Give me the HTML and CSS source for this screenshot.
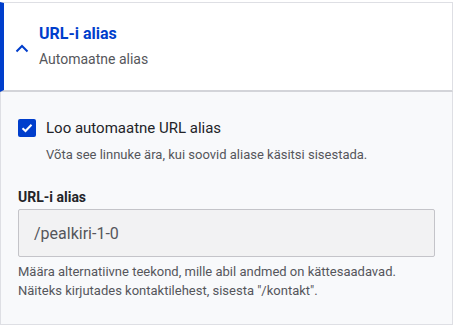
FILE: index.html
```html
<!DOCTYPE html>
<html lang="et">
<head>
  <meta charset="UTF-8" />
  <meta name="viewport" content="width=device-width, initial-scale=1.0"/>
  <title>URL-i alias</title>
  <link rel="stylesheet" href="styles.css">
</head>
<body>
  <div class="details">
    <div class="summary">
      <svg class="chevron" width="14" height="9" viewBox="0 0 14 9">
        <path d="M1.5 7.5 L7 2 L12.5 7.5" fill="none" stroke="#003ecc" stroke-width="2"/>
      </svg>
      <div class="summary-text">
        <div class="summary-title">URL-i alias</div>
        <div class="summary-sub">Automaatne alias</div>
      </div>
    </div>

    <div class="details-body">
      <div class="check-item">
        <label class="check-row">
          <span class="checkbox">
            <svg width="12" height="10" viewBox="0 0 12 10">
              <path d="M1.5 5.2 L4.5 8 L10.5 1.8" fill="none" stroke="#fff" stroke-width="2"/>
            </svg>
          </span>
          <span class="check-label">Loo automaatne URL alias</span>
        </label>
        <div class="check-desc">Võta see linnuke ära, kui soovid aliase käsitsi sisestada.</div>
      </div>

      <div class="field">
        <label class="field-label">URL-i alias</label>
        <div class="field-input">/pealkiri-1-0</div>
        <div class="field-desc">Määra alternatiivne teekond, mille abil andmed on kättesaadavad.<br>Näiteks kirjutades kontaktilehest, sisesta "/kontakt".</div>
      </div>
    </div>
  </div>
</body>
</html>
```

FILE: styles.css
```css
body {
  margin: 0;
  padding: 2px 0 0;
  background: #fff;
  font-family: Roboto, "Noto Sans", sans-serif;
  color: #232429;
}

.details {
  width: 453px;
}

.summary {
  display: flex;
  align-items: center;
  gap: 10px;
  padding: 21px 0 21px 11px;
  background: #fff;
  border-top: 1px solid #dedfe4;
  border-right: 1px solid #dedfe4;
  border-left: 4px solid #003ecc;
  border-bottom: 2px solid #d3d4d9;
}

.chevron {
  display: block;
  margin-top: 4px;
}

.summary-title {
  font-size: 16px;
  line-height: 20px;
  font-weight: 700;
  color: #003ecc;
}

.summary-sub {
  margin-top: 5px;
  font-size: 14px;
  line-height: 20px;
  color: #55565b;
}

.details-body {
  background: #f8f9fb;
  border-left: 1px solid #dedfe4;
  border-right: 1px solid #dedfe4;
  border-bottom: 1px solid #dedfe4;
  padding: 26px 17px 24px 17px;
}

.check-row {
  display: flex;
  align-items: center;
  gap: 10px;
}

.checkbox {
  width: 18px;
  height: 18px;
  border-radius: 2px;
  background: #003ecc;
  display: flex;
  align-items: center;
  justify-content: center;
}

.check-label {
  font-size: 15px;
  line-height: 20px;
}

.check-desc {
  margin: 8px 0 0 28px;
  font-size: 13px;
  line-height: 18px;
  color: #55565b;
}

.field {
  margin-top: 24px;
}

.field-label {
  display: block;
  font-size: 14px;
  line-height: 18px;
  font-weight: 700;
}

.field-input {
  margin-top: 3px;
  height: 48px;
  box-sizing: border-box;
  padding: 0 15px;
  display: flex;
  align-items: center;
  background: #f2f2f3;
  border: 1px solid #c4c4c9;
  border-radius: 2px;
  font-size: 16px;
  color: #55565b;
}

.field-desc {
  margin-top: 5px;
  font-size: 13px;
  line-height: 19px;
  color: #55565b;
}
```
